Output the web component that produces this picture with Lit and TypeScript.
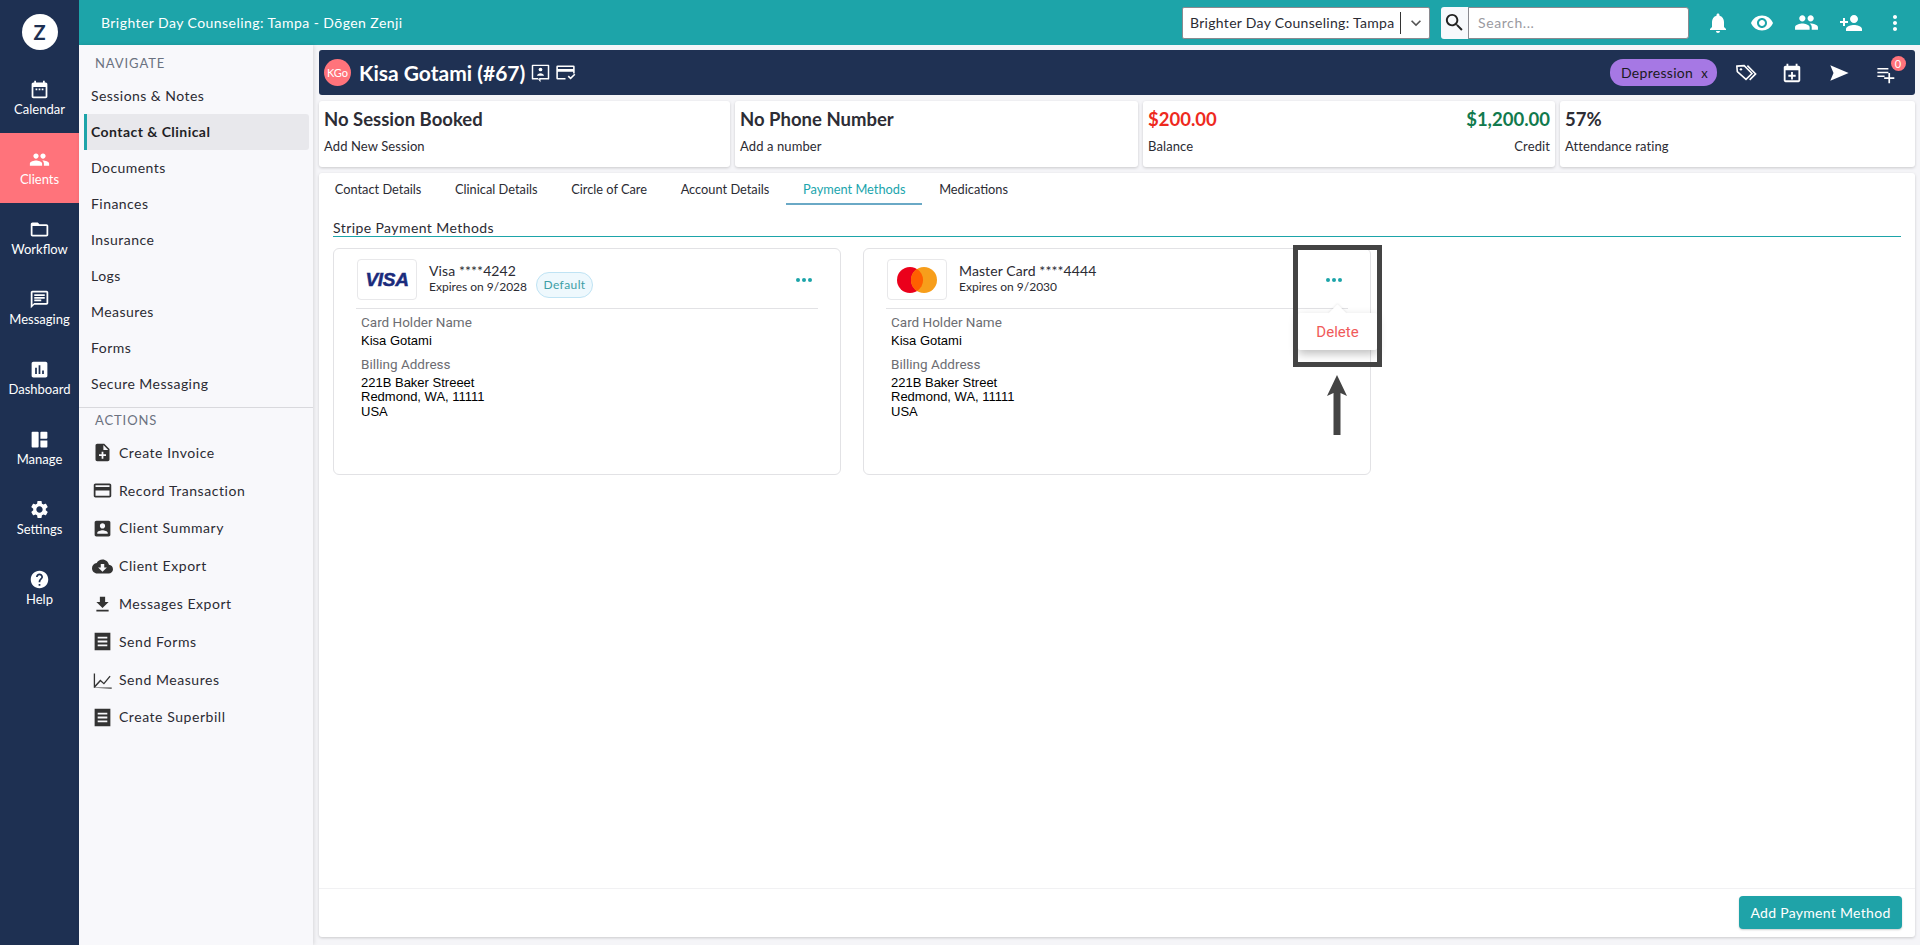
import { LitElement, css, html, svg } from 'lit';
import { customElement } from 'lit/decorators.js';
import { classMap } from 'lit/directives/class-map.js';

const icon = (d: unknown, size = 24, vb = '0 0 24 24') =>
  html`<svg width=${size} height=${size} viewBox=${vb} fill="currentColor">${d}</svg>`;

const P = {
  calendar: svg`<path d="M19 4h-1V2h-2v2H8V2H6v2H5c-1.1 0-2 .9-2 2v14c0 1.1.9 2 2 2h14c1.1 0 2-.9 2-2V6c0-1.1-.9-2-2-2zm0 16H5V9h14v11z"/><path d="M7.5 10.8h2v2h-2zM11 10.8h2v2h-2zM14.5 10.8h2v2h-2z"/>`,
  people: svg`<path d="M16 11c1.66 0 2.99-1.34 2.99-3S17.66 5 16 5c-1.66 0-3 1.34-3 3s1.34 3 3 3zm-8 0c1.66 0 2.99-1.34 2.99-3S9.66 5 8 5C6.34 5 5 6.34 5 8s1.34 3 3 3zm0 2c-2.33 0-7 1.17-7 3.5V19h14v-2.5c0-2.33-4.67-3.5-7-3.5zm8 0c-.29 0-.62.02-.97.05 1.16.84 1.97 1.97 1.97 3.45V19h6v-2.5c0-2.33-4.67-3.5-7-3.5z"/>`,
  folder: svg`<path d="M20 6h-8l-2-2H4c-1.1 0-1.99.9-1.99 2L2 18c0 1.1.9 2 2 2h16c1.1 0 2-.9 2-2V8c0-1.1-.9-2-2-2zm0 12H4V8h16v10z"/>`,
  message: svg`<path d="M20 2H4c-1.1 0-2 .9-2 2v18l4-4h14c1.1 0 2-.9 2-2V4c0-1.1-.9-2-2-2zm0 14H6l-2 2V4h16v12z"/><path d="M6 12h8v2H6zM6 9h12v2H6zM6 6h12v2H6z"/>`,
  chart: svg`<path d="M19 3H5c-1.1 0-2 .9-2 2v14c0 1.1.9 2 2 2h14c1.1 0 2-.9 2-2V5c0-1.1-.9-2-2-2zM9 17H7v-7h2v7zm4 0h-2V7h2v10zm4 0h-2v-4h2v4z"/>`,
  manage: svg`<path d="M4 3h6a1 1 0 0 1 1 1v16a1 1 0 0 1-1 1H4a1 1 0 0 1-1-1V4a1 1 0 0 1 1-1zM14 3h6a1 1 0 0 1 1 1v6a1 1 0 0 1-1 1h-7V4a1 1 0 0 1 1-1zM13 13h8v7a1 1 0 0 1-1 1h-6a1 1 0 0 1-1-1z"/>`,
  settings: svg`<path d="M19.14 12.94c.04-.3.06-.61.06-.94 0-.32-.02-.64-.07-.94l2.03-1.58c.18-.14.23-.41.12-.61l-1.92-3.32c-.12-.22-.37-.29-.59-.22l-2.39.96c-.5-.38-1.03-.7-1.62-.94l-.36-2.54c-.04-.24-.24-.41-.48-.41h-3.84c-.24 0-.43.17-.47.41l-.36 2.54c-.59.24-1.13.57-1.62.94l-2.39-.96c-.22-.08-.47 0-.59.22L2.74 8.87c-.12.21-.08.47.12.61l2.03 1.58c-.05.3-.07.63-.07.94s.02.64.07.94l-2.03 1.58c-.18.14-.23.41-.12.61l1.92 3.32c.12.22.37.29.59.22l2.39-.96c.5.38 1.03.7 1.62.94l.36 2.54c.05.24.24.41.48.41h3.84c.24 0 .44-.17.47-.41l.36-2.54c.59-.24 1.13-.56 1.62-.94l2.39.96c.22.08.47 0 .59-.22l1.92-3.32c.12-.22.07-.47-.12-.61l-2.01-1.58zM12 15.6c-1.98 0-3.6-1.62-3.6-3.6s1.62-3.6 3.6-3.6 3.6 1.62 3.6 3.6-1.62 3.6-3.6 3.6z"/>`,
  help: svg`<path d="M12 2C6.48 2 2 6.48 2 12s4.48 10 10 10 10-4.48 10-10S17.52 2 12 2zm1 17h-2v-2h2v2zm2.07-7.75l-.9.92C13.45 12.9 13 13.5 13 15h-2v-.5c0-1.1.45-2.1 1.17-2.83l1.24-1.26c.37-.36.59-.86.59-1.41 0-1.1-.9-2-2-2s-2 .9-2 2H8c0-2.21 1.79-4 4-4s4 1.79 4 4c0 .88-.36 1.68-.93 2.25z"/>`,
  noteAdd: svg`<path d="M14 2H6c-1.1 0-1.99.9-1.99 2L4 20c0 1.1.89 2 1.99 2H18c1.1 0 2-.9 2-2V8l-6-6zm2 14h-3v3h-2v-3H8v-2h3v-3h2v3h3v2zm-3-7V3.5L18.5 9H13z"/>`,
  card: svg`<path d="M20 4H4c-1.11 0-1.99.89-1.99 2L2 18c0 1.11.89 2 2 2h16c1.11 0 2-.89 2-2V6c0-1.11-.89-2-2-2zm0 14H4v-6h16v6zm0-10H4V6h16v2z"/>`,
  accountBox: svg`<path d="M3 5v14c0 1.1.89 2 2 2h14c1.1 0 2-.9 2-2V5c0-1.1-.9-2-2-2H5c-1.11 0-2 .9-2 2zm12 4c0 1.66-1.34 3-3 3s-3-1.34-3-3 1.34-3 3-3 3 1.34 3 3zm-9 8c0-2 4-3.1 6-3.1s6 1.1 6 3.1v1H6v-1z"/>`,
  cloud: svg`<path d="M19.35 10.04C18.67 6.59 15.64 4 12 4 9.11 4 6.6 5.64 5.35 8.04 2.34 8.36 0 10.91 0 14c0 3.31 2.69 6 6 6h13c2.76 0 5-2.24 5-5 0-2.64-2.05-4.78-4.65-4.96zM17 13l-5 5-5-5h3V9h4v4h3z"/>`,
  getApp: svg`<path d="M19 9h-4V3H9v6H5l7 7 7-7zM5 18v2h14v-2H5z"/>`,
  forms: svg`<path fill-rule="evenodd" d="M3 2h18v20H3zM6.5 6.5v2.2h11V6.5zM6.5 10.9v2.2h11v-2.2zM6.5 15.3v2.2h11v-2.2z"/>`,
  measures: svg`<path d="M2 21.5V5h1.5v13.6l6-6.6 4 3.6 6.6-8 1.2 1-7.6 9.2-4-3.6-6.2 6.8h19v1.5z"/>`,
  bell: svg`<path d="M12 22c1.1 0 2-.9 2-2h-4c0 1.1.89 2 2 2zm6-6v-5c0-3.07-1.64-5.64-4.5-6.32V4c0-.83-.67-1.5-1.5-1.5s-1.5.67-1.5 1.5v.68C7.63 5.36 6 7.92 6 11v5l-2 2v1h16v-1l-2-2z"/>`,
  eye: svg`<path d="M12 4.5C7 4.5 2.73 7.61 1 12c1.73 4.39 6 7.5 11 7.5s9.27-3.11 11-7.5c-1.73-4.39-6-7.5-11-7.5zM12 17c-2.76 0-5-2.24-5-5s2.24-5 5-5 5 2.24 5 5-2.24 5-5 5zm0-8c-1.66 0-3 1.34-3 3s1.34 3 3 3 3-1.34 3-3-1.34-3-3-3z"/>`,
  personAdd: svg`<path d="M15 12c2.21 0 4-1.79 4-4s-1.79-4-4-4-4 1.79-4 4 1.79 4 4 4zm-9-2V7H4v3H1v2h3v3h2v-3h3v-2H6zm9 4c-2.67 0-8 1.34-8 4v2h16v-2c0-2.66-5.33-4-8-4z"/>`,
  dots: svg`<path d="M12 8c1.1 0 2-.9 2-2s-.9-2-2-2-2 .9-2 2 .9 2 2 2zm0 2c-1.1 0-2 .9-2 2s.9 2 2 2 2-.9 2-2-.9-2-2-2zm0 6c-1.1 0-2 .9-2 2s.9 2 2 2 2-.9 2-2-.9-2-2-2z"/>`,
  search: svg`<path d="M15.5 14h-.79l-.28-.27C15.41 12.59 16 11.11 16 9.5 16 5.91 13.09 3 9.5 3S3 5.91 3 9.5 5.91 16 9.5 16c1.61 0 3.09-.59 4.23-1.57l.27.28v.79l5 4.99L20.49 19l-4.99-5zm-6 0C7.01 14 5 11.99 5 9.5S7.01 5 9.5 5 14 7.01 14 9.5 11.99 14 9.5 14z"/>`,
  tags: svg`<path fill="none" stroke="currentColor" stroke-width="1.7" d="M2 4.5 10 4 18.5 12.5 12 19 2.5 10.5zM13.5 4 22.5 13 16 19.5"/><circle cx="6.5" cy="8" r="1.3"/>`,
  eventAdd: svg`<path d="M19 4h-1V2h-2v2H8V2H6v2H5c-1.1 0-2 .9-2 2v14c0 1.1.9 2 2 2h14c1.1 0 2-.9 2-2V6c0-1.1-.9-2-2-2zm0 16H5V9h14v11z"/><path d="M11 11h2v3h3v2h-3v3h-2v-3H8v-2h3z"/>`,
  send: svg`<path d="M2.5 3.5 22.5 12l-20 8.5 3.5-8.5z"/>`,
  queue: svg`<path d="M3 6h13v1.8H3zM3 10.5h13v1.8H3zM3 15h8.5v1.8H3zM16 12h2v5h5v2h-5v5h-2v-5h-5v-2h5z"/>`,
  chatPerson: svg`<path d="M21 3H3a1 1 0 0 0-1 1v15a1 1 0 0 0 1 1h6.5l2.5 3 .01-3H21a1 1 0 0 0 1-1V4a1 1 0 0 0-1-1zm-.7 15.3h-9.8v2l-1.4-2H3.7V4.7h16.6z"/><circle cx="12" cy="8.6" r="2.1"/><path d="M8 15.8c0-2 2.4-3 4-3s4 1 4 3z"/>`,
  cardCheck: svg`<path d="M3 4h18a1.5 1.5 0 0 1 1.5 1.5V13h-1.8v-2H3.3v7.2H12V20H3a1.5 1.5 0 0 1-1.5-1.5v-13A1.5 1.5 0 0 1 3 4zm.3 1.8V8h17.4V5.8z"/><path d="m14.5 16.8 1.3-1.3 2 2 4.2-4.2 1.3 1.3-5.5 5.5z"/>`,
};

const RAIL = [
  { label: 'Calendar', path: P.calendar },
  { label: 'Clients', path: P.people, active: true },
  { label: 'Workflow', path: P.folder },
  { label: 'Messaging', path: P.message },
  { label: 'Dashboard', path: P.chart },
  { label: 'Manage', path: P.manage },
  { label: 'Settings', path: P.settings },
  { label: 'Help', path: P.help },
];

const NAV = ['Sessions & Notes', 'Contact & Clinical', 'Documents', 'Finances', 'Insurance', 'Logs', 'Measures', 'Forms', 'Secure Messaging'];

const ACTIONS = [
  { label: 'Create Invoice', path: P.noteAdd },
  { label: 'Record Transaction', path: P.card },
  { label: 'Client Summary', path: P.accountBox },
  { label: 'Client Export', path: P.cloud },
  { label: 'Messages Export', path: P.getApp },
  { label: 'Send Forms', path: P.forms },
  { label: 'Send Measures', path: P.measures },
  { label: 'Create Superbill', path: P.forms },
];

const TABS = ['Contact Details', 'Clinical Details', 'Circle of Care', 'Account Details', 'Payment Methods', 'Medications'];

@customElement('app-root')
export class AppRoot extends LitElement {
  static styles = css`
    :host {
      display: block;
      width: 1920px;
      height: 945px;
      overflow: hidden;
      font-family: 'Lato', 'Open Sans', sans-serif;
      color: #2b2b33;
      background: #f5f5f8;
    }
    * { box-sizing: border-box; }
    svg { display: block; flex: none; }

    .app { display: flex; height: 945px; }

    .rail { width: 79px; flex: none; background: #1e3052; color: #fff; }
    .logo-wrap { height: 63px; display: flex; justify-content: center; padding-top: 14px; }
    .logo {
      width: 36px; height: 36px; border-radius: 50%; background: #fff; color: #1e3052;
      font: 700 20px/36px 'Lato', sans-serif; text-align: center;
    }
    .rail-item {
      height: 70px; display: flex; flex-direction: column; align-items: center; justify-content: center;
      font-size: 13px; line-height: 16px; gap: 1px;
    }
    .rail-item.active { background: #ff737b; }

    .right { flex: 1; min-width: 0; display: flex; flex-direction: column; }
    .topbar {
      height: 45px; flex: none; background: #1da4a9; color: #fff; display: flex; align-items: center;
      padding-left: 22px; font-size: 14px; letter-spacing: 0.44px;
    }
    .brand { flex: 1; }
    .select {
      width: 248px; height: 32px; background: #fff; border: 1px solid #8a8a90; border-radius: 2px; color: #2b2b33;
      display: flex; align-items: center; padding-left: 7px; font-size: 14px; letter-spacing: 0.3px; white-space: nowrap;
    }
    .select .sep { width: 1px; height: 22px; background: #333; margin-left: 6px; }
    .select .chev { margin-left: 5px; color: #555; }
    .search-btn {
      width: 27px; height: 32px; margin-left: 11px; background: #f7f9fc; border-radius: 3px 0 0 3px; color: #222;
      display: flex; align-items: center; justify-content: center;
    }
    .search {
      width: 221px; height: 32px; border: 1px solid #8a8a90; border-radius: 0 3px 3px 0; background: #fff;
      padding: 0 9px; font: 14px 'Lato', sans-serif; letter-spacing: 0.6px; outline: none;
    }
    .search::placeholder { color: #9a9a9f; }
    .top-icons { display: flex; align-items: center; margin-left: 17px; width: 214px; gap: 20px; }

    .body { flex: 1; min-height: 0; display: flex; }

    .subnav { width: 234px; flex: none; background: #f8f8fb; box-shadow: 1px 0 4px rgba(0, 0, 0, 0.12); }
    .subnav h4 {
      margin: 0; font-weight: 400; font-size: 13px; letter-spacing: 0.9px; color: #6b7280; padding-left: 16px; line-height: 16px;
    }
    .nav-head { padding-top: 10px; height: 32.5px; }
    .nav-item {
      height: 36px; margin-left: 5px; width: 225px; display: flex; align-items: center;
      font-size: 14px; letter-spacing: 0.45px; border-left: 3px solid transparent; padding-left: 4px;
    }
    .nav-item.active { background: #e8e8ec; border-left-color: #1da4a9; font-weight: 700; border-radius: 0 3px 3px 0; color: #1f1f26; }
    .subnav hr { margin: 5.5px 0 0; border: 0; border-top: 1px solid #d9d9dd; }
    .act-head { padding-top: 4px; height: 26px; }
    .action {
      height: 37.8px; display: flex; align-items: center; gap: 6px; padding-left: 13px;
      font-size: 14px; letter-spacing: 0.55px;
    }
    .action svg { color: #333; }
    .action span { margin-top: -1px; }

    .main { flex: 1; min-width: 0; padding: 5px 5px 8px 6px; display: flex; flex-direction: column; gap: 6px; }
    .patient {
      height: 45px; flex: none; background: #1f3153; color: #fff; border-radius: 3px; display: flex; align-items: center;
      padding-left: 5px;
    }
    .avatar {
      width: 27px; height: 27px; border-radius: 50%; background: #ff737b; font-size: 11px; line-height: 27px;
      text-align: center; margin-right: 8px; flex: none;
    }
    .pname { font-size: 21px; font-weight: 700; margin-right: 5px; }
    .p-left-icons { display: flex; gap: 4px; }
    .chip {
      margin-left: auto; width: 107px; height: 27px; border-radius: 13px; background: #a678e4; color: #1a1a22;
      font-size: 14px; letter-spacing: 0.3px; display: flex; align-items: center; padding-left: 11px; gap: 8px; white-space: nowrap;
    }
    .chip .x { font-size: 13px; }
    .p-icons { display: flex; gap: 24.5px; align-items: center; margin-left: 17.5px; padding-right: 19px; position: relative; }
    .badge {
      position: absolute; right: 9.5px; top: -6px; width: 15px; height: 15px; border-radius: 50%; background: #ff737b; color: #fff;
      font-size: 11px; line-height: 15px; text-align: center;
    }

    .stats { display: grid; grid-template-columns: 411px 403px 412px 355px; gap: 5px; flex: none; height: 66px; }
    .stat {
      background: #fff; border-radius: 3px; box-shadow: 0 1px 3px rgba(0, 0, 0, 0.18); padding: 6px 5px 0 5px;
    }
    .stat .row { display: flex; justify-content: space-between; }
    .stat .big { font-size: 18.5px; font-weight: 700; line-height: 24px; color: #2d2d35; }
    .stat .small { font-size: 13px; margin-top: 7px; line-height: 16px; letter-spacing: 0.1px; }
    .red { color: #ee2a1e !important; }
    .green { color: #117a4d !important; }

    .panel {
      flex: 1; min-height: 0; background: #fff; border-radius: 3px; box-shadow: 0 1px 3px rgba(0, 0, 0, 0.18);
      display: flex; flex-direction: column;
    }
    .tabs { display: flex; height: 32px; flex: none; margin-left: -1px; }
    .tab {
      padding: 1px 16.8px 0; height: 32px; display: flex; align-items: center; font-size: 12.8px;
      border-bottom: 2px solid transparent;
    }
    .tab.active { color: #1ba5ad; border-bottom-color: #6aa9c6; }
    .content { flex: 1; min-height: 0; padding: 15px 14px 0 14px; }
    .section {
      height: 16px; font-size: 14px; line-height: 16px; letter-spacing: 0.42px; border-bottom: 1px solid #1da4a9;
      box-sizing: content-box; margin-bottom: 11px;
    }
    .cards { display: flex; gap: 22px; }
    .pm {
      position: relative; width: 508px; height: 227px; border: 1px solid #e2e2e5; border-radius: 6px; padding: 10px 22px 0 22px;
    }
    .pm-head { display: flex; height: 50px; border-bottom: 1px solid #e2e2e5; padding-left: 1px; }
    .brand-box {
      width: 60px; height: 41px; border: 1px solid #e8e8ea; border-radius: 4px; display: flex; align-items: center; justify-content: center; flex: none;
    }
    .visa { font: italic 700 19px 'Liberation Sans', sans-serif; color: #1a2b7c; letter-spacing: -0.3px; -webkit-text-stroke: 0.5px #1a2b7c; }
    .pm-title { margin-left: 12px; padding-top: 3px; }
    .pm-name { font-size: 14px; line-height: 17px; letter-spacing: 0.1px; }
    .pm-exp { font-size: 12px; line-height: 16px; }
    .pill {
      margin: 13px 0 0 9px; width: 57px; height: 26px; border-radius: 13px; border: 1px solid #bfe3f4; background: #eef8fd; color: #3d9ea6;
      font-size: 12px; line-height: 24px; text-align: center; letter-spacing: 0.4px;
    }
    .more { margin-left: auto; display: flex; gap: 2px; margin-top: 19px; margin-right: 6px; height: 4px; }
    .more i { width: 4px; height: 4px; border-radius: 50%; background: #1da4a9; }
    .pm-body { padding: 4px 0 0 5px; font-family: 'Roboto', 'Liberation Sans', sans-serif; }
    .lbl { font-size: 13.5px; line-height: 18px; color: #6d6d72; }
    .val { font-size: 13px; line-height: 14.5px; color: #000; margin-top: 3px; margin-bottom: 6px; font-family: 'Liberation Sans', sans-serif; }

    .footer { height: 49px; flex: none; border-top: 1px solid #f1f1f3; display: flex; justify-content: flex-end; padding: 7px 13px 0 0; }
    .btn {
      width: 163px; height: 33px; background: #1fa3a8; color: #fff; border-radius: 4px; font-size: 14px; letter-spacing: 0.3px;
      display: flex; align-items: center; justify-content: center; box-shadow: 0 1px 2px rgba(0, 0, 0, 0.2);
    }

    .popover {
      position: absolute; left: 434px; top: 64px; width: 79px; height: 37px; background: #fff; border-radius: 2px;
      box-shadow: 0 4px 10px rgba(0, 0, 0, 0.25); color: #f05a5a; font: 15px/38px 'Roboto', sans-serif; text-align: center; z-index: 2;
    }
    .popover::before {
      content: ''; position: absolute; left: 33px; top: -6px; width: 13px; height: 13px; background: #fff; transform: rotate(45deg);
      box-shadow: -1px -1px 2px rgba(0, 0, 0, 0.06);
    }
    .callout { position: absolute; left: 429px; top: -4px; width: 89px; height: 122px; border: 5px solid #444; z-index: 3; }
    .arrow { position: absolute; left: 463px; top: 126px; z-index: 3; color: #444; }
  `;

  private _card(name: string, exp: string, street: string, logo: unknown, isDefault: boolean, extra: unknown = null) {
    return html`
      <div class="pm">
        <div class="pm-head">
          <div class="brand-box">${logo}</div>
          <div class="pm-title">
            <div class="pm-name">${name}</div>
            <div class="pm-exp">${exp}</div>
          </div>
          ${isDefault ? html`<div class="pill">Default</div>` : null}
          <div class="more"><i></i><i></i><i></i></div>
        </div>
        <div class="pm-body">
          <div class="lbl">Card Holder Name</div>
          <div class="val">Kisa Gotami</div>
          <div class="lbl">Billing Address</div>
          <div class="val">${street}<br />Redmond, WA, 11111<br />USA</div>
        </div>
        ${extra}
      </div>
    `;
  }

  render() {
    const mastercard = html`<svg width="40" height="26" viewBox="0 0 40 26">
      <circle cx="13" cy="13" r="13" fill="#eb001b"></circle>
      <circle cx="27" cy="13" r="13" fill="#f79e1b"></circle>
      <path d="M20 2a13 13 0 0 1 0 22 13 13 0 0 1 0-22z" fill="#ff5f00"></path>
    </svg>`;
    return html`
      <div class="app">
        <aside class="rail">
          <div class="logo-wrap"><div class="logo">Z</div></div>
          ${RAIL.map(
            (r) => html`<div class=${classMap({ 'rail-item': true, active: !!r.active })}>${icon(r.path, 21)}<span>${r.label}</span></div>`,
          )}
        </aside>
        <div class="right">
          <header class="topbar">
            <div class="brand">Brighter Day Counseling: Tampa - Dōgen Zenji</div>
            <div class="select">
              Brighter Day Counseling: Tampa<span class="sep"></span>
              <span class="chev">${icon(svg`<path d="M7.41 8.59 12 13.17l4.59-4.58L18 10l-6 6-6-6z"/>`, 20)}</span>
            </div>
            <div class="search-btn">${icon(P.search, 23)}</div>
            <input class="search" placeholder="Search..." />
            <div class="top-icons">
              ${icon(P.bell)}${icon(P.eye)}${icon(P.people, 25)}${icon(P.personAdd)}${icon(P.dots)}
            </div>
          </header>
          <div class="body">
            <nav class="subnav">
              <div class="nav-head"><h4>NAVIGATE</h4></div>
              ${NAV.map((n, i) => html`<div class=${classMap({ 'nav-item': true, active: i === 1 })}>${n}</div>`)}
              <hr />
              <div class="act-head"><h4>ACTIONS</h4></div>
              ${ACTIONS.map((a) => html`<div class="action">${icon(a.path, 21)}<span>${a.label}</span></div>`)}
            </nav>
            <main class="main">
              <div class="patient">
                <div class="avatar">KGo</div>
                <div class="pname">Kisa Gotami (#67)</div>
                <div class="p-left-icons">${icon(P.chatPerson, 21)}${icon(P.cardCheck, 21)}</div>
                <div class="chip">Depression <span class="x">x</span></div>
                <div class="p-icons">
                  ${icon(P.tags, 22)}${icon(P.eventAdd, 22)}${icon(P.send, 22)}${icon(P.queue, 22, '-1 -1 26 26')}
                  <span class="badge">0</span>
                </div>
              </div>
              <div class="stats">
                <div class="stat"><div class="big">No Session Booked</div><div class="small">Add New Session</div></div>
                <div class="stat"><div class="big">No Phone Number</div><div class="small">Add a number</div></div>
                <div class="stat">
                  <div class="row"><span class="big red">$200.00</span><span class="big green">$1,200.00</span></div>
                  <div class="row small"><span>Balance</span><span>Credit</span></div>
                </div>
                <div class="stat"><div class="big">57%</div><div class="small">Attendance rating</div></div>
              </div>
              <section class="panel">
                <div class="tabs">
                  ${TABS.map((t, i) => html`<div class=${classMap({ tab: true, active: i === 4 })}>${t}</div>`)}
                </div>
                <div class="content">
                  <div class="section">Stripe Payment Methods</div>
                  <div class="cards">
                    ${this._card('Visa ****4242', 'Expires on 9/2028', '221B Baker Streeet', html`<span class="visa">VISA</span>`, true)}
                    ${this._card(
                      'Master Card ****4444',
                      'Expires on 9/2030',
                      '221B Baker Street',
                      mastercard,
                      false,
                      html`
                        <div class="popover">Delete</div>
                        <div class="callout"></div>
                        <svg class="arrow" width="20" height="60" viewBox="0 0 20 60" fill="currentColor">
                          <path d="M10 0 20 21 13.5 18V60H6.5V18L0 21z"></path>
                        </svg>
                      `,
                    )}
                  </div>
                </div>
                <div class="footer"><div class="btn">Add Payment Method</div></div>
              </section>
            </main>
          </div>
        </div>
      </div>
    `;
  }
}
